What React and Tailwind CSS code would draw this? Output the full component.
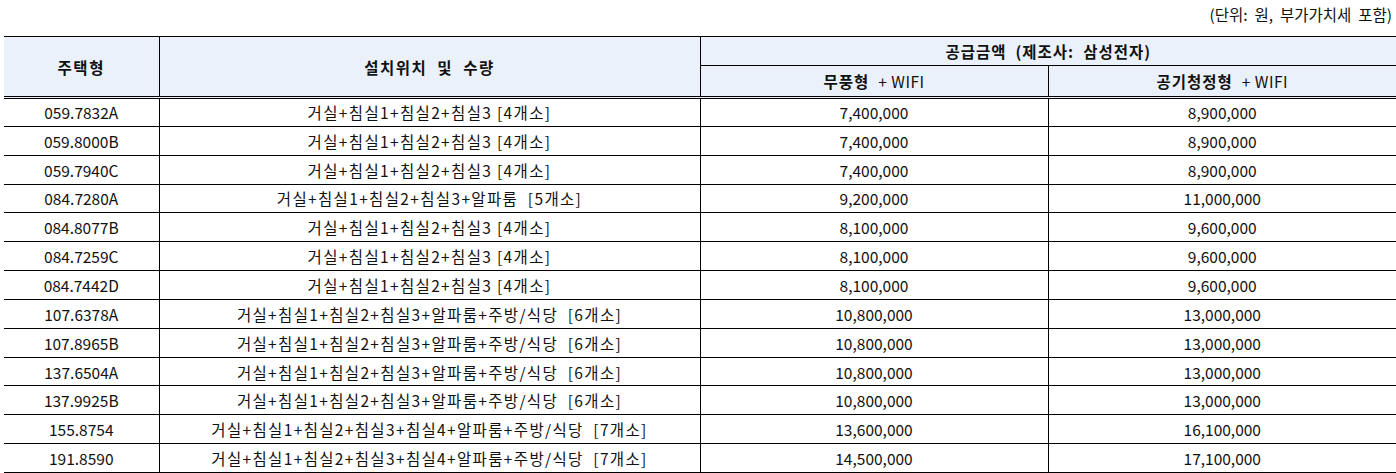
import React from "react";

const rows = [
  ["059.7832A", "거실+침실1+침실2+침실3 [4개소]", "7,400,000", "8,900,000"],
  ["059.8000B", "거실+침실1+침실2+침실3 [4개소]", "7,400,000", "8,900,000"],
  ["059.7940C", "거실+침실1+침실2+침실3 [4개소]", "7,400,000", "8,900,000"],
  ["084.7280A", "거실+침실1+침실2+침실3+알파룸  [5개소]", "9,200,000", "11,000,000"],
  ["084.8077B", "거실+침실1+침실2+침실3 [4개소]", "8,100,000", "9,600,000"],
  ["084.7259C", "거실+침실1+침실2+침실3 [4개소]", "8,100,000", "9,600,000"],
  ["084.7442D", "거실+침실1+침실2+침실3 [4개소]", "8,100,000", "9,600,000"],
  ["107.6378A", "거실+침실1+침실2+침실3+알파룸+주방/식당  [6개소]", "10,800,000", "13,000,000"],
  ["107.8965B", "거실+침실1+침실2+침실3+알파룸+주방/식당  [6개소]", "10,800,000", "13,000,000"],
  ["137.6504A", "거실+침실1+침실2+침실3+알파룸+주방/식당  [6개소]", "10,800,000", "13,000,000"],
  ["137.9925B", "거실+침실1+침실2+침실3+알파룸+주방/식당  [6개소]", "10,800,000", "13,000,000"],
  ["155.8754", "거실+침실1+침실2+침실3+침실4+알파룸+주방/식당  [7개소]", "13,600,000", "16,100,000"],
  ["191.8590", "거실+침실1+침실2+침실3+침실4+알파룸+주방/식당  [7개소]", "14,500,000", "17,100,000"],
];

export default function App() {
  return (
    <div
      className="w-[1396px] h-[473px] bg-white text-[#111] overflow-hidden"
      style={{ fontFamily: '"Noto Sans CJK KR", "Noto Sans", sans-serif' }}
    >
      <div className="h-[36px] flex justify-end items-start pt-[4px] pr-[4px] text-[15.5px] leading-[20px] whitespace-pre">
        (단위:  원,  부가가치세  포함)
      </div>
      <table className="ml-[4px] w-[1392px] border-collapse table-fixed text-[15.5px] leading-[20px]">
        <colgroup>
          <col className="w-[155px]" />
          <col className="w-[541px]" />
          <col className="w-[348px]" />
          <col className="w-[348px]" />
        </colgroup>
        <thead>
          <tr className="h-[29px] bg-[#eaf1fa]">
            <th rowSpan={2} className="border-t border-black border-r font-bold text-center align-middle border-b-[3px] border-b-black border-double tracking-[1.5px]">
              주택형
            </th>
            <th rowSpan={2} className="border-t border-black border-r font-bold text-center align-middle border-b-[3px] border-b-black border-double whitespace-pre tracking-[1.5px]">
              설치위치  및  수량
            </th>
            <th colSpan={2} className="border-t border-black border-b font-bold text-center align-middle p-0 whitespace-pre tracking-[1px]">
              공급금액  (제조사:  삼성전자)
            </th>
          </tr>
          <tr className="h-[32px] bg-[#eaf1fa]">
            <th className="border-r border-black font-bold text-center align-middle border-b-[3px] border-b-black border-double p-0 whitespace-pre tracking-[1px]">
              무풍형  <span className="font-normal tracking-[0.5px]">+ WIFI</span>
            </th>
            <th className="font-bold text-center align-middle border-b-[3px] border-b-black border-double p-0 whitespace-pre tracking-[1px]">
              공기청정형  <span className="font-normal tracking-[0.5px]">+ WIFI</span>
            </th>
          </tr>
        </thead>
        <tbody>
          {rows.map((r, i) => (
            <tr key={i} className="h-[28.85px]">
              <td className="border-b border-r border-black text-center p-0">{r[0]}</td>
              <td className="border-b border-r border-black text-center p-0 whitespace-pre tracking-[1.35px]">{r[1]}</td>
              <td className="border-b border-r border-black text-center p-0">{r[2]}</td>
              <td className="border-b border-black text-center p-0">{r[3]}</td>
            </tr>
          ))}
        </tbody>
      </table>
    </div>
  );
}
